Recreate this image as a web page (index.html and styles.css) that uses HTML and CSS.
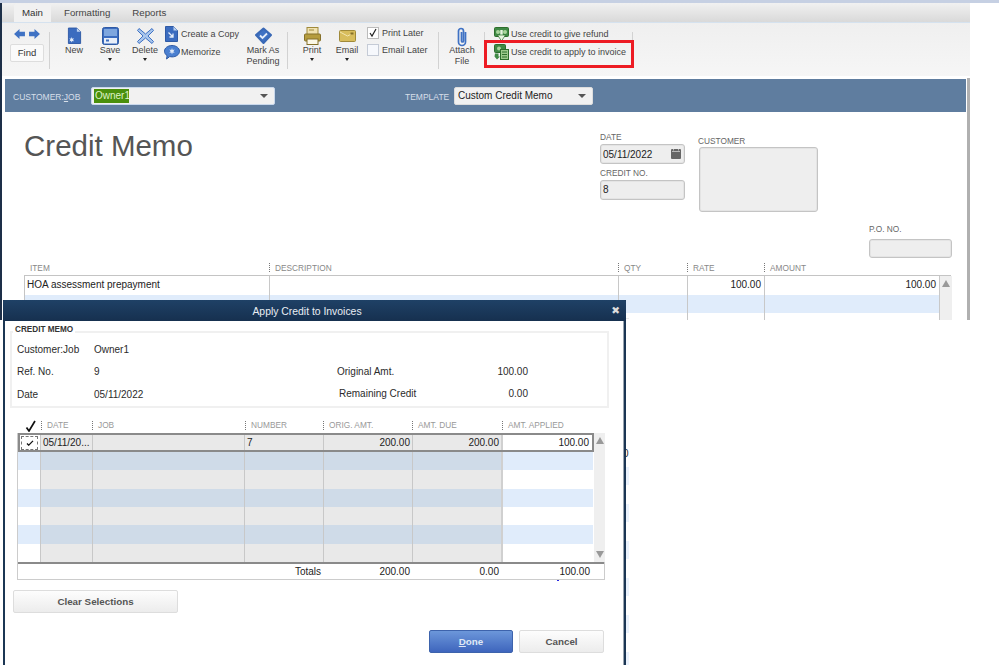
FILE: index.html
```html
<!DOCTYPE html>
<html lang="en">
<head>
<meta charset="utf-8">
<title>Credit Memo</title>
<link rel="stylesheet" href="styles.css">
</head>
<body>
<div class="topstrip"></div>
<div class="window">
  <div class="tabs">
    <div class="tab active">Main</div>
    <div class="tab tab-fmt">Formatting</div>
    <div class="tab tab-rep">Reports</div>
  </div>
  <div class="toolbar">
    <div class="nav">
      <div class="arrows">
        <svg width="11" height="10" viewBox="0 0 12 11"><path d="M0 5.500 6 0v3h6v5H6v3z" fill="#3f72c4"/></svg>
        <svg width="11" height="10" viewBox="0 0 12 11"><path d="M12 5.500 6 0v3H0v5h6v3z" fill="#3f72c4"/></svg>
      </div>
      <div class="find">Find</div>
    </div>
    <div class="sep sep1"></div>
    <div class="tool t-new">
      <svg width="15" height="18" viewBox="0 0 16 19"><path d="M1.500 1h9l4 4v12.500H1.500z" fill="#3b6cbf" stroke="#2f5aa5"/><path d="M10.500 1v4h4z" fill="#bcd2f0"/><path d="M5 10.500l.7 1.800 1.800-.3-1.100 1.500 1.100 1.500-1.800-.3-.7 1.800-.7-1.800-1.800.3 1.100-1.500L2.500 12l1.800.3z" fill="#e4edf9"/></svg>
      <span>New</span>
    </div>
    <div class="tool t-save">
      <svg width="17" height="18" viewBox="0 0 17 18"><rect x=".5" y=".5" width="16" height="17" rx="2" fill="#3b6cbf" stroke="#2f5aa5"/><rect x="2" y="2" width="13" height="7" fill="#7ea6de"/><rect x="2" y="11" width="13" height="5.500" fill="#e8eef8"/><rect x="4" y="12.500" width="3" height="2" fill="#3b6cbf"/></svg>
      <span>Save</span><i class="caret"></i>
    </div>
    <div class="tool t-del">
      <svg width="17" height="18" viewBox="0 0 17 18"><path d="M2 1.500l6.500 5.500L15 1.500l1.500 2L11 9l5.500 5.500-1.500 2-6.500-5.500L2 16.500l-1.500-2L6 9 .5 3.500z" fill="#a9c6ec" stroke="#3f72c4"/></svg>
      <span>Delete</span><i class="caret"></i>
    </div>
    <div class="stack">
      <div class="line"><svg width="13" height="16" viewBox="0 0 13 16"><path d="M.5.500h8l4 4v11H.5z" fill="#3b6cbf" stroke="#2f5aa5"/><path d="M8.500.500v4h4z" fill="#bcd2f0"/><path d="M3.500 6.500l4.500 4.500M8 7.500V11H4.500" fill="none" stroke="#e4edf9" stroke-width="1.300"/></svg><span>Create a Copy</span></div>
      <div class="line line-mem"><svg width="16" height="15" viewBox="0 0 16 15"><path d="M8 .5c4.200 0 7.500 2.500 7.500 5.700s-3.300 5.700-7.500 5.700c-.8 0-1.600-.1-2.300-.3L2.500 14l.6-3.300C1.500 9.600.5 8 .5 6.200.5 3 3.800.500 8 .5z" fill="#4a7fd0" stroke="#2f5aa5"/><path d="M8 3l.7 2 2-.4-1.300 1.600 1.300 1.600-2-.4-.7 2-.7-2-2 .4 1.300-1.600L5.300 4.600l2 .4z" fill="#dfe9f8"/></svg><span>Memorize</span></div>
    </div>
    <div class="tool t-mark">
      <svg width="17" height="17" viewBox="0 0 17 17"><path d="M8.500 1.500 16 8 8.500 16 1 8z" fill="#3f72c4" stroke="#3a69b6" stroke-linejoin="round" stroke-width="2"/><path d="M5 8.500l2.500 2.500 4.500-4.500" fill="none" stroke="#e4edf9" stroke-width="1.800"/></svg>
      <span>Mark As<br>Pending</span>
    </div>
    <div class="sep sep2"></div>
    <div class="tool t-print">
      <svg width="17" height="18" viewBox="0 0 17 18"><rect x="3" y=".5" width="11" height="7" fill="#f0e2b0" stroke="#a08a3a"/><rect x="5" y="2.500" width="5" height="1" fill="#a08a3a"/><rect x=".5" y="7" width="16" height="7" rx="1" fill="#b59c3e" stroke="#85702a"/><rect x="3" y="12" width="11" height="5.500" fill="#fbf7e6" stroke="#85702a"/></svg>
      <span>Print</span><i class="caret"></i>
    </div>
    <div class="tool t-email">
      <svg width="17" height="18" viewBox="0 0 17 18"><rect x=".5" y="3.500" width="16" height="11" rx="1" fill="#d8bd5c" stroke="#a08a3a"/><path d="M1 5l7.500 4 3-1.500" fill="none" stroke="#f3e5ae"/><rect x="11.500" y="5.500" width="3" height="2" fill="#85702a"/></svg>
      <span>Email</span><i class="caret"></i>
    </div>
    <div class="checks">
      <div class="check-line">
        <svg class="cb" width="12" height="12" viewBox="0 0 12 12"><rect x=".5" y=".5" width="11" height="11" fill="#fff" stroke="#bbb"/><path d="M3 6l2 3 4-7" fill="none" stroke="#222" stroke-width="1.200"/></svg>
        <span>Print Later</span>
      </div>
      <div class="check-line">
        <svg class="cb" width="12" height="12" viewBox="0 0 12 12"><rect x=".5" y=".5" width="11" height="11" fill="#f6f8fc" stroke="#c5cbd6"/></svg>
        <span>Email Later</span>
      </div>
    </div>
    <div class="sep sep3"></div>
    <div class="tool t-attach">
      <svg width="12" height="20" viewBox="0 0 12 20"><path d="M9.500 5v10a3.500 3.500 0 0 1-7 0V4a2.500 2.500 0 0 1 5 0v10a1 1 0 0 1-2 0V5" fill="none" stroke="#3f72c4" stroke-width="1.700"/></svg>
      <span>Attach<br>File</span>
    </div>
    <div class="sep sep4"></div>
    <div class="credit">
      <div class="line"><svg width="15" height="15" viewBox="0 0 15 15"><rect x=".5" y=".5" width="14" height="9" rx="1" fill="#3f8a45" stroke="#2d6e2c"/><circle cx="4" cy="5" r="2" fill="#a9d49c"/><circle cx="11" cy="5" r="2" fill="#a9d49c"/><path d="M7.500 3v5" stroke="#e6f4df" stroke-width="2.500"/><path d="M3.500 8h8l-4 6z" fill="#e6f4df" stroke="#2d6e2c" stroke-width=".7"/></svg><span>Use credit to give refund</span></div>
      <div class="line line-apply"><svg width="15" height="16" viewBox="0 0 15 16"><rect x=".5" y=".5" width="11" height="8" rx="1" fill="#3f8a45" stroke="#2d6e2c"/><circle cx="5" cy="4.500" r="2" fill="#a9d49c"/><rect x="6.500" y="5.500" width="8" height="10" fill="#9ccb8c" stroke="#2d6e2c"/><path d="M8 8h5M8 10.500h5M8 13h5" stroke="#2d6e2c"/><path d="M1 9.500h3.500v3H6L3 15.500l-2.500-3z" fill="#3f8a45"/></svg><span>Use credit to apply to invoice</span></div>
    </div>
    <div class="sep sep5"></div>
    <div class="redbox"></div>
  </div>
  <div class="bluebar">
    <span class="bar-label">CUSTOMER:<u>J</u>OB</span>
    <div class="combo combo-job"><span class="selected">Owner1</span><i class="caret dark"></i></div>
    <span class="bar-label label-tpl">TEMPLATE</span>
    <div class="combo combo-tpl"><span>Custom Credit Memo</span><i class="caret dark"></i></div>
  </div>
  <div class="form">
    <h1 class="doc-title">Credit Memo</h1>
    <div class="col-date">
      <label class="lbl">DATE</label>
      <div class="field f-date"><span>05/11/2022</span><svg width="10" height="10" viewBox="0 0 10 10"><rect width="10" height="10" rx="1" fill="#666"/><path d="M1 2.500h8M2.500 0v1.500M7.500 0v1.500" stroke="#ddd" stroke-width=".7"/></svg></div>
      <label class="lbl lbl-credit">CREDIT NO.</label>
      <div class="field f-credit">8</div>
    </div>
    <div class="col-cust">
      <label class="lbl">CUSTOMER</label>
      <div class="field f-cust"></div>
    </div>
    <div class="col-po">
      <label class="lbl">P.O. NO.</label>
      <div class="field f-po"></div>
    </div>
  </div>
  <div class="items-head">
    <span class="h h-item">ITEM</span><span class="h h-desc dots">DESCRIPTION</span><span class="h h-qty dots">QTY</span><span class="h h-rate dots">RATE</span><span class="h h-amt dots">AMOUNT</span>
  </div>
  <div class="items">
    <div class="items-rows">
      <div class="item-row"><span class="ci">HOA assessment prepayment</span><span class="cd"></span><span class="cq"></span><span class="cr">100.00</span><span class="ca">100.00</span></div>
      <div class="item-row blue"><span class="ci"></span><span class="cd"></span><span class="cq"></span><span class="cr"></span><span class="ca"></span></div>
      <div class="item-row"><span class="ci"></span><span class="cd"></span><span class="cq"></span><span class="cr"></span><span class="ca"></span></div>
    </div>
    <div class="sb"><i class="up"></i></div>
  </div>
</div>

<div class="ghost"><span class="ghost-zero">0</span></div>

<section class="modal">
  <header class="modal-title"><span>Apply Credit to Invoices</span><b class="close">✖</b></header>
  <fieldset class="memo">
    <legend>CREDIT MEMO</legend>
    <div class="memo-col memo-left">
      <div class="mrow"><span class="mk">Customer:Job</span><span>Owner1</span></div>
      <div class="mrow"><span class="mk">Ref. No.</span><span>9</span></div>
      <div class="mrow"><span class="mk">Date</span><span>05/11/2022</span></div>
    </div>
    <div class="memo-col memo-right">
      <div class="mrow"><span class="mk2">Original Amt.</span><span class="mv">100.00</span></div>
      <div class="mrow"><span class="mk2 indent">Remaining Credit</span><span class="mv">0.00</span></div>
    </div>
  </fieldset>
  <div class="gh">
    <span class="g-check"><svg width="12" height="12" viewBox="0 0 12 12"><path d="M1.500 7.500l2.500 3.500L10 1" fill="none" stroke="#111" stroke-width="1.700"/></svg></span>
    <span class="dots">DATE</span><span class="dots">JOB</span><span class="dots">NUMBER</span><span class="dots">ORIG. AMT.</span><span class="dots">AMT. DUE</span><span class="dots">AMT. APPLIED</span>
  </div>
  <div class="grid">
    <div class="grid-body">
      <div class="rows">
        <div class="row first"><span class="w"><em class="focus"><svg width="8" height="6" viewBox="0 0 9 7"><path d="M1 4l2 2 5-5" fill="none" stroke="#111" stroke-width="1.500"/></svg></em></span><span class="g">05/11/20...</span><span class="g"></span><span class="g">7</span><span class="g num">200.00</span><span class="g num">200.00</span><span class="w num">100.00</span></div>
        <div class="row blue"><span class="w"></span><span class="g"></span><span class="g"></span><span class="g"></span><span class="g"></span><span class="g"></span><span class="w"></span></div>
        <div class="row"><span class="w"></span><span class="g"></span><span class="g"></span><span class="g"></span><span class="g"></span><span class="g"></span><span class="w"></span></div>
        <div class="row blue"><span class="w"></span><span class="g"></span><span class="g"></span><span class="g"></span><span class="g"></span><span class="g"></span><span class="w"></span></div>
        <div class="row"><span class="w"></span><span class="g"></span><span class="g"></span><span class="g"></span><span class="g"></span><span class="g"></span><span class="w"></span></div>
        <div class="row blue"><span class="w"></span><span class="g"></span><span class="g"></span><span class="g"></span><span class="g"></span><span class="g"></span><span class="w"></span></div>
        <div class="row"><span class="w"></span><span class="g"></span><span class="g"></span><span class="g"></span><span class="g"></span><span class="g"></span><span class="w"></span></div>
      </div>
      <div class="sb sb-grid"><i class="up"></i><i class="down"></i></div>
    </div>
    <div class="totals"><span class="t-lbl">Totals</span><span class="num">200.00</span><span class="num">0.00</span><span class="num">100.00</span></div>
  </div>
  <i class="tick"></i>
  <button class="btn clear">Clear Selections</button>
  <div class="actions">
    <button class="btn done"><u>D</u>one</button>
    <button class="btn cancel">Cancel</button>
  </div>
</section>
</body>
</html>
```

FILE: styles.css
```css
* { box-sizing: border-box; }
html, body { margin: 0; padding: 0; }
body {
  width: 999px;
  height: 665px;
  overflow: hidden;
  position: relative;
  background: #fff;
  font-family: "Liberation Sans", Arial, sans-serif;
  font-size: 10px;
  color: #2b2b2b;
}
.topstrip { height: 3px; background: #c6d0e3; }

/* main window */
.window {
  width: 970px;
  height: 317px;
  overflow: hidden;
  border-left: 2px solid #1d2f48;
  position: relative;
  background: #fff;
}
.tabs {
  height: 19px;
  background: linear-gradient(#f1f1f1, #d9d9d9);
  display: flex;
  align-items: flex-end;
  font-size: 9.700px;
  color: #444;
}
.tab { height: 18px; line-height: 18px; }
.tab.active {
  width: 37px;
  margin-left: 12px;
  background: #f1f1f1;
  text-align: center;
  border-radius: 2px 2px 0 0;
  color: #333;
}
.tab-fmt { margin-left: 13px; }
.tab-rep { margin-left: 22px; }

.toolbar {
  height: 54px;
  border-top: 1px solid #d5e2ef;
  background: linear-gradient(#efefef, #f6f6f6);
  display: flex;
  align-items: flex-start;
  position: relative;
  font-size: 9px;
  color: #444;
  line-height: 11px;
}
.nav { margin-left: 8px; width: 34px; }
.arrows { display: flex; justify-content: space-between; padding: 6px 4px 0 4px; height: 21px; }
.find {
  height: 18px;
  line-height: 16px;
  font-size: 9.500px;
  text-align: center;
  background: #fafafa;
  border: 1px solid #ddd;
  border-radius: 2px;
  color: #333;
}
.sep { width: 1px; height: 37px; margin-top: 9px; background: #d2d2d2; }
.sep1 { margin-left: 5px; }
.sep2 { margin-left: 4px; }
.sep3 { margin-left: 8px; }
.sep4 { margin-left: 6px; height: 10px; }
.sep5 { margin-left: 0; height: 10px; }

.tool {
  width: 32px;
  display: flex;
  flex-direction: column;
  align-items: center;
  text-align: center;
  padding-top: 4px;
  flex: none;
}
.tool svg { flex: none; }
.t-new { margin-left: 8px; }
.t-save { margin-left: 4px; }
.t-del { margin-left: 3px; }
.t-mark { margin-left: 2px; width: 40px; }
.t-mark svg { margin-bottom: 1px; }
.t-print { margin-left: 8px; }
.t-email { margin-left: 3px; }
.t-attach { margin-left: 7px; }
.t-attach svg { margin-bottom: -2px; }
.caret {
  width: 0; height: 0;
  border-left: 2.500px solid transparent;
  border-right: 2.500px solid transparent;
  border-top: 3px solid #222;
  margin-top: 2px;
}
.stack { margin-left: 4px; width: 76px; flex: none; padding-top: 3px; }
.line { display: flex; align-items: center; height: 16px; white-space: nowrap; }
.line svg { flex: none; }
.line span { margin-left: 3px; }
.line-mem { margin-top: 2px; margin-left: -1px; }
.line-mem span { margin-left: 1px; }
.checks { margin-left: 4px; width: 63px; padding-top: 4px; flex: none; }
.check-line { display: flex; align-items: center; height: 12px; margin-bottom: 5px; white-space: nowrap; }
.check-line span { margin-left: 3px; }
.credit { margin-left: 9px; width: 138px; flex: none; padding-top: 3px; }
.credit .line { height: 16px; }
.credit .line span { margin-left: 2px; }
.line-apply { margin-top: 2px; }
.redbox {
  position: absolute;
  left: 482px;
  top: 17px;
  width: 150px;
  height: 28px;
  border: 3px solid #ed1c24;
}

.bluebar {
  margin: 3px 3px 0 3px;
  width: 961px;
  height: 33px;
  background: #5f7d9f;
  display: flex;
  align-items: center;
  position: relative;
}
.window::after {
  content: "";
  position: absolute;
  left: 965px;
  top: 75px;
  width: 3px;
  bottom: 0;
  background: #b0b0b0;
}
.bar-label { font-size: 8.500px; color: #d7dfe9; margin-left: 8px; padding-top: 2px; width: 78px; white-space: nowrap; }
.combo {
  height: 18px;
  background: #f1f1f1;
  border: 1px solid #c9d8ec;
  border-radius: 2px;
  display: flex;
  align-items: center;
  justify-content: space-between;
  font-size: 10px;
  color: #222;
  padding: 0 6px 0 2px;
}
.combo .caret { margin: 0; width: 0; }
.caret.dark { border-left-width: 4px; border-right-width: 4px; border-top: 4px solid #555; }
.combo-job { width: 184px; }
.selected { background: #4a8f0c; color: #dff2c8; padding: 0 1px; width: 35px; height: 14px; line-height: 14px; }
.label-tpl { margin-left: 130px; width: 49px; }
.combo-tpl { width: 139px; padding-left: 3px; border-color: #ddd; }

/* form head */
.form { position: relative; height: 150px; display: flex; padding-left: 22px; }
.doc-title { margin: 15px 0 0; width: 576px; font-size: 29.500px; font-weight: normal; color: #555; line-height: 38px; flex: none; }
.lbl { display: block; font-size: 8.300px; color: #666; line-height: 10px; }
.field { background: #eee; border: 1px solid #c4c4c4; border-radius: 3px; box-shadow: inset 0 0 0 1px #e4e4e4; color: #222; }
.col-date { width: 85px; flex: none; padding-top: 20px; }
.f-date { height: 20px; margin-top: 2px; display: flex; align-items: center; justify-content: space-between; padding: 0 3px 0 2px; }
.lbl-credit { margin-top: 4px; }
.f-credit { height: 20px; margin-top: 2px; line-height: 18px; padding-left: 2px; }
.col-cust { width: 119px; margin-left: 14px; flex: none; padding-top: 24px; }
.col-cust .lbl { margin-left: -1px; }
.col-cust .field { margin-top: 1px; height: 65px; }
.col-po { position: absolute; left: 867px; top: 112px; width: 83px; }
.col-po .field { margin-top: 5px; height: 19px; }

/* line items */
.items-head { display: flex; margin-left: 22px; height: 13px; font-size: 8.300px; color: #888; line-height: 12px; }
.h { display: block; padding-left: 6px; }
.h-item { width: 245px; }
.h-desc { width: 349px; }
.h-qty { width: 69px; }
.h-rate { width: 77px; }
.h-amt { width: 176px; }
.dots { position: relative; }
.dots::before {
  content: "";
  position: absolute;
  left: 0;
  top: 1px;
  height: 9px;
  border-left: 1px dotted #777;
}
.items { display: flex; width: 927px; margin: 0 0 0 22px; border: 1px solid #c4c4c4; border-bottom: 0; border-right: 0; height: 60px; }
.items-rows { width: 915px; flex: none; }
.item-row { display: flex; height: 19px; font-size: 10px; line-height: 17px; color: #222; }
.item-row.blue { background: #e0ecfb; height: 18px; }
.item-row span { display: block; border-right: 1px solid #c8c8c8; padding: 0 3px; flex: none; }
.ci { width: 245px; padding-left: 2px !important; }
.cd { width: 349px; }
.cq { width: 69px; }
.cr { width: 77px; text-align: right; }
.ca { width: 175px; text-align: right; }
.sb { width: 12px; background: #efefef; position: relative; flex: none; }
.up, .down { position: absolute; left: 2px; width: 0; height: 0; border-left: 4px solid transparent; border-right: 4px solid transparent; }
.up { top: 4px; border-bottom: 7px solid #999; }
.down { bottom: 4px; border-top: 7px solid #999; }

/* ghost of window behind the dialog */
.ghost {
  position: absolute;
  left: 626px;
  top: 318px;
  width: 3px;
  height: 347px;
  background: repeating-linear-gradient(#eaf2fd 0 18px, #fff 18px 37px) 0 148px no-repeat;
  background-size: 3px 199px;
  border-top: 1px solid #e8e8e8;
}
.ghost-zero { position: absolute; left: -3px; top: 129px; width: 6px; height: 12px; overflow: hidden; font-size: 10px; clip-path: inset(0 0 0 3px); }

/* dialog */
.modal {
  position: absolute;
  left: 3px;
  top: 300px;
  width: 623px;
  height: 365px;
  background: #fff;
  border-left: 2px solid #1b3654;
  border-right: 2px solid #1b3654;
  box-shadow: inset -1px 0 0 #9aa5b1;
}
.modal-title {
  height: 21px;
  margin: 0 -2px;
  padding-right: 15px;
  background: linear-gradient(#1f4166, #16304f);
  border-radius: 2px 2px 0 0;
  color: #e9eef4;
  font-size: 10.400px;
  line-height: 23px;
  text-align: center;
  position: relative;
}
.close { position: absolute; right: 6px; top: -1px; font-size: 10.500px; color: #ddd; font-family: "DejaVu Sans", sans-serif; }
.memo {
  margin: 10px 15px 0 5px;
  padding: 0;
  height: 77px;
  border: 2px solid #f0f0f0;
  position: relative;
  display: flex;
  font-size: 10px;
}
.memo legend { position: absolute; left: 1px; top: -8px; padding: 0 2px; background: #fff; font-size: 8.200px; font-weight: bold; color: #333; line-height: 10px; }
.memo-col { padding-top: 5px; }
.memo-left { width: 325px; padding-left: 5px; }
.memo-right { padding-top: 27px; width: 191px; margin-left: 0; }
.mrow { display: flex; height: 22.500px; align-items: center; }
.mk { width: 77px; }
.mk2 { flex: 1; }
.mk2.indent { padding-left: 2px; }
.mv { text-align: right; }

.gh { display: flex; margin: 10px 0 0 12px; height: 15px; font-size: 8.300px; color: #999; line-height: 15px; }
.gh > span { display: block; padding-left: 6px; }
.g-check { width: 24px; padding: 2px 0 0 8px !important; }
.gh > span:nth-child(2) { width: 51px; }
.gh > span:nth-child(3) { width: 153px; }
.gh > span:nth-child(4) { width: 78px; }
.gh > span:nth-child(5) { width: 89px; }
.gh > span:nth-child(6) { width: 90px; }
.gh > span:nth-child(7) { width: 90px; }
.gh .dots::before { top: 3px; }

.grid { margin-left: 12px; width: 588px; border: 1px solid #ccc; border-top: 0; }
.grid-body { display: flex; height: 131px; border-bottom: 2px solid #8a8a8a; }
.rows { width: 576px; flex: none; }
.row { display: flex; height: 18.330px; font-size: 10px; line-height: 17px; color: #222; }
.row span { display: block; flex: none; border-right: 1px solid #c8c8c8; padding: 0 3px; }
.row span:nth-child(1) { width: 23px; padding: 0; }
.row span:nth-child(2) { width: 52px; }
.row span:nth-child(3) { width: 152px; }
.row span:nth-child(4) { width: 79px; }
.row span:nth-child(5) { width: 89px; }
.row span:nth-child(6) { width: 90px; border-right: 2px solid #d0d0d0; }
.row span:nth-child(7) { width: 90px; border-right: 0; }
.g { background: #e9e9e9; }
.w { background: #fff; }
.row.blue .g { background: #cfdbe8; }
.row.blue .w { background: #e0ecfb; }
.num { text-align: right; }
.row.first { height: 19px; border: 2px solid #8a8a8a; line-height: 15px; }
.row.first span { padding: 0 2px; }
.row.first span:nth-child(1) { width: 21px; padding: 0; }
.row.first span:nth-child(7) { width: 88px; }
.focus { display: flex; align-items: center; justify-content: center; width: 17px; height: 14px; margin: 1px 0 0 1px; border: 1px dashed #777; background: #fff; }
.sb-grid { width: 11px; }
.totals { display: flex; height: 15px; line-height: 15px; font-size: 10px; color: #222; }
.t-lbl { width: 303px; text-align: right; flex: none; }
.totals .num:nth-child(2) { width: 89px; flex: none; }
.totals .num:nth-child(3) { width: 89px; flex: none; }
.totals .num:nth-child(4) { width: 91px; flex: none; }
.tick { position: absolute; left: 552px; top: 280px; width: 2px; height: 1px; background: #2a2ae0; }

.btn {
  font-family: inherit;
  font-weight: bold;
  font-size: 9.800px;
  color: #555;
  background: linear-gradient(#fdfdfd, #ececec);
  border: 1px solid #ddd;
  border-radius: 2px;
  padding: 0;
  display: block;
}
.clear { width: 165px; height: 23px; margin: 10px 0 0 8px; }
.actions { display: flex; gap: 6px; margin: 17px 0 0 424px; }
.done { width: 84px; height: 23px; background: linear-gradient(#6c97da, #3e65bd); border-color: #3d63ac; color: #dfe8f5; }
.cancel { width: 85px; height: 23px; }
```
